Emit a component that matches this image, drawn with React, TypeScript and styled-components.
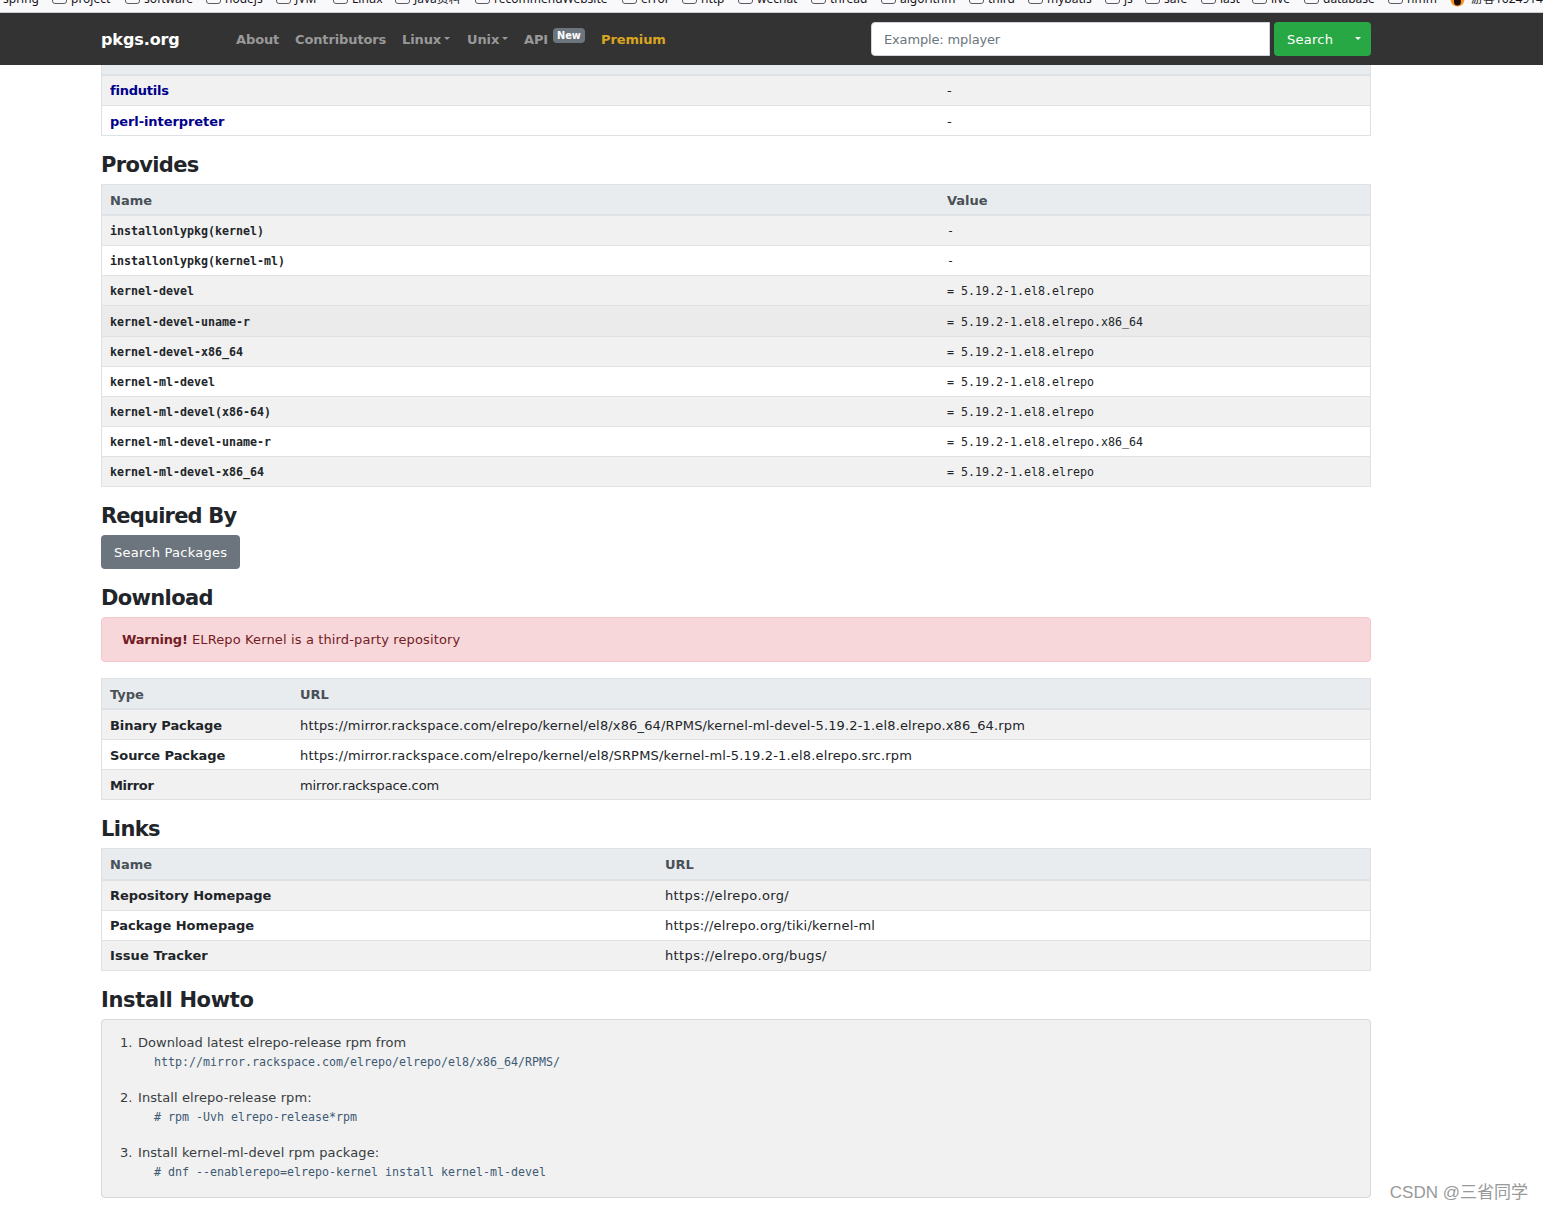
import React from "react";
import styled, { createGlobalStyle, css } from "styled-components";

const sans = `Verdana, "DejaVu Sans", sans-serif`;
const mono = `"DejaVu Sans Mono", monospace`;

const GlobalStyle = createGlobalStyle`
  *, *::before, *::after { box-sizing: border-box; }
  html, body { margin: 0; padding: 0; background: #fff; overflow: hidden; }
  body { font: 13px/20px ${sans}; color: #212529; }
`;

const Page = styled.div`
  position: relative;
  width: 1543px;
  height: 1211px;
  overflow: hidden;
`;

const Bookmarks = styled.div`
  display: flex;
  align-items: flex-end;
  height: 13px;
  overflow: hidden;
  background: #f9f9fb;
  border-bottom: 1px solid #ccc;
  font: 12px/16px "Noto Sans", "Noto Sans CJK SC", sans-serif;
  color: #15141a;
`;

const Bookmark = styled.div<{ $w: number; $gap?: number }>`
  display: flex;
  align-items: center;
  gap: ${(p) => p.$gap ?? 4}px;
  flex: none;
  width: ${(p) => p.$w}px;
  height: 16px;
  margin-bottom: 5px;
  white-space: nowrap;
`;

const FolderShape = styled.span`
  flex: none;
  width: 15px;
  height: 13px;
  margin-bottom: 3px;
  border: 1.5px solid #5b5b66;
  border-radius: 3px;
`;

const Lead = styled.span`
  width: 3px;
  margin-right: -4px;
`;

const NavBar = styled.nav`
  height: 52px;
  padding: 0 172px 0 101px;
  background: #333;
`;

const NavInner = styled.div`
  display: flex;
  align-items: center;
  height: 52px;
`;

const Brand = styled.a`
  width: 135px;
  padding-top: 2px;
  color: #fff;
  font-size: 16px;
  font-weight: 700;
  letter-spacing: -0.1px;
`;

const NavLink = styled.a<{ $w: number; $gold?: boolean }>`
  display: flex;
  align-items: center;
  flex: none;
  width: ${(p) => p.$w}px;
  padding-top: 2px;
  color: ${(p) => (p.$gold ? "#daa520" : "#999")};
  font-weight: 700;
  letter-spacing: -0.12px;
  white-space: nowrap;
`;

const Caret = styled.span`
  margin: -3px 0 0 3px;
  border-top: 3px solid currentColor;
  border-left: 3px solid transparent;
  border-right: 3px solid transparent;
`;

const Badge = styled.span`
  height: 15px;
  margin: -10px 0 0 5px;
  padding: 0 4px;
  border-radius: 4px;
  background: #6c757d;
  color: #fff;
  font-size: 9.75px;
  letter-spacing: 0;
  line-height: 15px;
`;

const SearchForm = styled.div`
  display: flex;
  gap: 4px;
  margin-left: auto;
`;

const SearchInput = styled.div`
  width: 399px;
  height: 34px;
  padding: 7px 12px 5px;
  border: 1px solid #ced4da;
  border-radius: 4px 0 0 4px;
  background: #fff;
  color: #6c757d;
  letter-spacing: -0.15px;
`;

const SearchButton = styled.div`
  display: flex;
  align-items: center;
  justify-content: space-between;
  width: 97px;
  height: 34px;
  padding: 2px 10px 0 13px;
  border-radius: 4px;
  background: #28a745;
  color: #fff;
  letter-spacing: 0.25px;
`;

const Content = styled.main`
  display: flex;
  flex-direction: column;
  align-items: flex-start;
  width: 1270px;
  margin-left: 101px;
`;

const Heading = styled.h2<{ $track: number }>`
  height: 48px;
  margin: 0;
  padding-top: 16px;
  font-size: 21px;
  font-weight: 700;
  line-height: 26px;
  letter-spacing: ${(p) => p.$track}px;
`;

const TableBox = styled.div<{ $open?: boolean }>`
  width: 100%;
  border: 1px solid #dee2e6;
  border-bottom: 0;
  ${(p) => p.$open && "border-top: 0;"}
`;

const TableRow = styled.div<{ $first: number; $h?: number; $bg?: string; $drop?: number }>`
  display: grid;
  grid-template-columns: ${(p) => p.$first}px 1fr;
  align-items: center;
  height: ${(p) => p.$h ?? 30}px;
  padding-left: 8px;
  padding-top: ${(p) => p.$drop ?? 0}px;
  border-bottom: 1px solid #dee2e6;
  background: ${(p) => p.$bg ?? "#fff"};
  white-space: nowrap;
`;

const HeadRow = styled(TableRow)`
  border-bottom-width: 2px;
  background: #e9ecef;
  color: #495057;
  font-weight: 700;
`;

const ClippedHead = styled.div`
  height: 11px;
  width: 100%;
  border: 1px solid #dee2e6;
  border-width: 0 1px 2px;
  background: #e9ecef;
`;

const Cell = styled.span<{ $mono?: boolean; $bold?: boolean; $link?: boolean; $track?: number }>`
  font-weight: ${(p) => (p.$bold ? 700 : 400)};
  color: ${(p) => (p.$link ? "#00008b" : "inherit")};
  letter-spacing: ${(p) => p.$track ?? 0}px;
  ${(p) =>
    p.$mono &&
    css`
      font-family: ${mono};
      font-size: 11.63px;
    `}
`;

const GreyButton = styled.div`
  width: 139px;
  height: 34px;
  padding: 8px 0 6px 13px;
  border-radius: 4px;
  background: #6c757d;
  color: #fff;
  letter-spacing: 0.25px;
  white-space: nowrap;
`;

const Alert = styled.div`
  width: 100%;
  height: 45px;
  margin-bottom: 16px;
  padding: 12px 20px;
  border: 1px solid #f5c6cb;
  border-radius: 4px;
  background: #f8d7da;
  color: #721c24;
  letter-spacing: 0.13px;

  strong {
    letter-spacing: -0.2px;
  }
`;

const HowtoCard = styled.div`
  display: flex;
  flex-direction: column;
  gap: 16px;
  width: 100%;
  height: 179px;
  padding: 13px 18px;
  border: 1px solid #d5d7d9;
  border-radius: 4px;
  background: #f1f1f1;
  color: #383d41;
`;

const Step = styled.div`
  display: grid;
  grid-template-columns: 18px 1fr;
  grid-template-rows: 20px 19px;
`;

const StepTitle = styled.span<{ $track: number }>`
  letter-spacing: ${(p) => p.$track}px;
`;

const Code = styled.code`
  grid-column: 2;
  padding-left: 16px;
  color: #3d5a73;
  font: 11.63px/19px ${mono};
`;

const Watermark = styled.div`
  position: absolute;
  right: 15px;
  bottom: 6px;
  color: #999;
  font: 17px/24px "Liberation Sans", "Noto Sans CJK SC", sans-serif;
`;

const folders: [string, number][] = [
  ["project", 73], ["software", 81], ["nodejs", 70], ["JVM", 57], ["Linux", 62],
  ["Java资料", 80], ["recommendWebsite", 147], ["error", 60], ["http", 56],
  ["wechat", 73], ["thread", 70], ["algorithm", 88], ["third", 59], ["mybatis", 77],
  ["js", 40], ["safe", 56], ["last", 51], ["live", 52], ["database", 84], ["hmm", 62],
];

type RowData = { name: string; value: string; nameTrack?: number; track?: number; drop?: number };

type TableProps = {
  head?: [string, string];
  rows: RowData[];
  first: number;
  headHeight?: number;
  monoText?: boolean;
  link?: boolean;
  hover?: number;
};

function DataTable({ head, rows, first, headHeight = 31, monoText, link, hover }: TableProps) {
  return (
    <TableBox $open={!head}>
      {head && (
        <HeadRow $first={first} $h={headHeight} $drop={2}>
          <span>{head[0]}</span>
          <span>{head[1]}</span>
        </HeadRow>
      )}
      {rows.map((r, i) => (
        <TableRow
          key={r.name}
          $first={first}
          $h={i === hover ? 31 : 30}
          $bg={i === hover ? "#ebebeb" : i % 2 ? "#fff" : "#f1f1f1"}
          $drop={r.drop}
        >
          <Cell $bold $mono={monoText} $link={link} $track={r.nameTrack}>{r.name}</Cell>
          <Cell $mono={monoText} $track={r.track}>{r.value}</Cell>
        </TableRow>
      ))}
    </TableBox>
  );
}

const requires: RowData[] = [
  { name: "findutils", value: "-", nameTrack: -0.22 },
  { name: "perl-interpreter", value: "-", nameTrack: -0.08, drop: 2 },
];

const v = "= 5.19.2-1.el8.elrepo";
const provides: RowData[] = [
  { name: "installonlypkg(kernel)", value: "-" },
  { name: "installonlypkg(kernel-ml)", value: "-" },
  { name: "kernel-devel", value: v },
  { name: "kernel-devel-uname-r", value: v + ".x86_64", drop: 2 },
  { name: "kernel-devel-x86_64", value: v },
  { name: "kernel-ml-devel", value: v },
  { name: "kernel-ml-devel(x86-64)", value: v },
  { name: "kernel-ml-devel-uname-r", value: v + ".x86_64" },
  { name: "kernel-ml-devel-x86_64", value: v },
];

const downloads: RowData[] = [
  {
    name: "Binary Package",
    value: "https://mirror.rackspace.com/elrepo/kernel/el8/x86_64/RPMS/kernel-ml-devel-5.19.2-1.el8.elrepo.x86_64.rpm",
    nameTrack: -0.07,
    track: 0.154,
    drop: 2,
  },
  {
    name: "Source Package",
    value: "https://mirror.rackspace.com/elrepo/kernel/el8/SRPMS/kernel-ml-5.19.2-1.el8.elrepo.src.rpm",
    nameTrack: -0.07,
    track: 0.168,
    drop: 2,
  },
  { name: "Mirror", value: "mirror.rackspace.com", nameTrack: -0.35, track: -0.08, drop: 2 },
];

const links: RowData[] = [
  { name: "Repository Homepage", value: "https://elrepo.org/", nameTrack: -0.05, track: 0.37 },
  { name: "Package Homepage", value: "https://elrepo.org/tiki/kernel-ml", track: 0.24 },
  { name: "Issue Tracker", value: "https://elrepo.org/bugs/", nameTrack: 0.08, track: 0.37 },
];

const steps: [string, string, number][] = [
  ["Download latest elrepo-release rpm from", "http://mirror.rackspace.com/elrepo/elrepo/el8/x86_64/RPMS/", 0.02],
  ["Install elrepo-release rpm:", "# rpm -Uvh elrepo-release*rpm", 0.09],
  ["Install kernel-ml-devel rpm package:", "# dnf --enablerepo=elrepo-kernel install kernel-ml-devel", 0.08],
];

export default function App() {
  return (
    <Page>
      <GlobalStyle />
      <Bookmarks>
        <Bookmark $w={52}><Lead />spring</Bookmark>
        {folders.map(([name, w]) => (
          <Bookmark key={name} $w={w}><FolderShape />{name}</Bookmark>
        ))}
        <Bookmark $w={93} $gap={6}>
          <svg width="15" height="15" viewBox="0 0 15 15">
            <circle cx="7.5" cy="7.5" r="7" fill="#f7931e" />
            <ellipse cx="7.5" cy="9.5" rx="3.5" ry="4" fill="#1b0d08" />
          </svg>
          游客1624914
        </Bookmark>
      </Bookmarks>
      <NavBar>
        <NavInner>
          <Brand>pkgs.org</Brand>
          <NavLink $w={59}>About</NavLink>
          <NavLink $w={107}>Contributors</NavLink>
          <NavLink $w={65}>Linux<Caret /></NavLink>
          <NavLink $w={57}>Unix<Caret /></NavLink>
          <NavLink $w={77}>API<Badge>New</Badge></NavLink>
          <NavLink $w={70} $gold>Premium</NavLink>
          <SearchForm>
            <SearchInput>Example: mplayer</SearchInput>
            <SearchButton>Search<Caret /></SearchButton>
          </SearchForm>
        </NavInner>
      </NavBar>
      <Content>
        <ClippedHead />
        <DataTable first={837} link rows={requires} />
        <Heading $track={-0.65}>Provides</Heading>
        <DataTable first={837} head={["Name", "Value"]} rows={provides} monoText hover={3} />
        <Heading $track={-0.8}>Required By</Heading>
        <GreyButton>Search Packages</GreyButton>
        <Heading $track={-0.65}>Download</Heading>
        <Alert><strong>Warning!</strong> ELRepo Kernel is a third-party repository</Alert>
        <DataTable first={190} head={["Type", "URL"]} rows={downloads} />
        <Heading $track={-0.6}>Links</Heading>
        <DataTable first={555} head={["Name", "URL"]} headHeight={32} rows={links} />
        <Heading $track={-0.35}>Install Howto</Heading>
        <HowtoCard>
          {steps.map(([title, code, track], i) => (
            <Step key={title}>
              <span>{i + 1}.</span>
              <StepTitle $track={track}>{title}</StepTitle>
              <Code>{code}</Code>
            </Step>
          ))}
        </HowtoCard>
      </Content>
      <Watermark>CSDN @三省同学</Watermark>
    </Page>
  );
}
